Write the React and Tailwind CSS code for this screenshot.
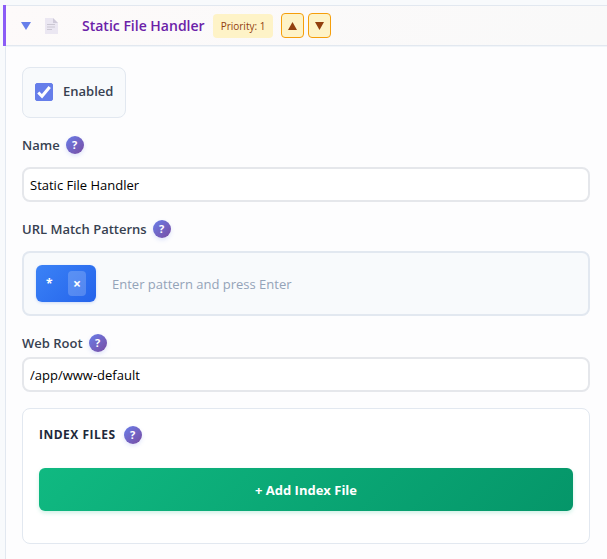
import React, { useState } from "react";

const HelpIcon = ({ topic }) => (
  <button
    type="button"
    aria-label={`Help: ${topic}`}
    className="flex h-[18px] w-[18px] shrink-0 items-center justify-center rounded-full bg-linear-135 from-[#667eea] to-[#764ba2] pb-px text-[11px] leading-none font-bold text-white shadow-[0_2px_4px_rgba(102,126,234,0.2)]"
  >
    ?
  </button>
);

const FieldLabel = ({ htmlFor, label }) => (
  <div className="flex items-center gap-1.5">
    <label htmlFor={htmlFor} className="text-[13px] leading-[18px] font-semibold text-[#374151]">
      {label}
    </label>
    <HelpIcon topic={label} />
  </div>
);

const TextField = ({ id, value, onChange }) => (
  <input
    id={id}
    type="text"
    value={value}
    onChange={(e) => onChange(e.target.value)}
    className="h-[35px] w-full rounded-lg border-2 border-[#e5e7eb] bg-white px-1.5 text-[13px] text-black outline-none"
  />
);

const DocumentIcon = () => (
  <svg width="13" height="16" viewBox="0 0 13 16" aria-hidden="true">
    <path d="M0 0h8l5 5v11H0z" fill="#ebe7f2" />
    <path d="M8 0l5 5H8z" fill="#cfcad9" />
    <path d="M2 6.5h8M2 9h8M2 11.5h5" stroke="#cbc7d2" strokeWidth="1" fill="none" />
  </svg>
);

const PriorityButton = ({ label, down }) => (
  <button type="button" aria-label={label} className="flex h-[25px] w-[23px] items-center justify-center rounded border border-[#f59e0b] bg-[#fef3c7]">
    <svg width="9" height="8" viewBox="0 0 9 8" fill="#92400e" aria-hidden="true">
      {down ? <path d="M0 0h9L4.5 8z" /> : <path d="M4.5 0L9 8H0z" />}
    </svg>
  </button>
);

const HandlerHeader = ({ title, open, onToggle }) => (
  <div className="border-l-[3px] border-l-[#8b5cf6]">
    <div className="flex h-[41px] items-center border-y border-[#e2e8f0] bg-linear-135 from-[#fdfafa] to-[#f9f9f9] pl-[15px]">
      <button type="button" aria-label="Toggle handler" aria-expanded={open} onClick={onToggle} className="mr-3.5 flex">
        <svg width="10" height="8" viewBox="0 0 10 8" fill="#667eea" aria-hidden="true">
          <path d="M0 0h10L5 8z" />
        </svg>
      </button>
      <DocumentIcon />
      <h3 className="ml-6 text-sm leading-5 font-semibold text-[#6b21a8]">{title}</h3>
      <span className="ml-2 rounded bg-[#fef3c7] px-2 py-1 text-[10px] leading-4 font-medium text-[#92400e]">Priority: 1</span>
      <div className="ml-2 flex gap-1">
        <PriorityButton label="Raise priority" />
        <PriorityButton label="Lower priority" down />
      </div>
    </div>
  </div>
);

const PatternTag = ({ pattern, onRemove }) => (
  <span className="flex h-[37px] min-w-[60px] items-center justify-between rounded-md bg-linear-135 from-[#3b82f6] to-[#2563eb] px-2.5 text-xs font-bold text-white shadow-[0_1px_3px_rgba(37,99,235,0.2)]">
    {pattern}
    <button
      type="button"
      aria-label={`Remove ${pattern}`}
      onClick={onRemove}
      className="flex h-[25px] w-[18px] items-center justify-center rounded-sm bg-white/20 text-sm font-bold"
    >
      ×
    </button>
  </span>
);

export default function App() {
  const [open, setOpen] = useState(true);
  const [enabled, setEnabled] = useState(true);
  const [name, setName] = useState("Static File Handler");
  const [webRoot, setWebRoot] = useState("/app/www-default");
  const [patterns, setPatterns] = useState(["*"]);
  const [draft, setDraft] = useState("");

  const addPattern = (e) => {
    if (e.key === "Enter" && draft.trim()) {
      setPatterns([...patterns, draft.trim()]);
      setDraft("");
    }
  };

  return (
    <main className="min-h-screen bg-[#f8fafc] pt-[5px] pl-[3px] font-['Open_Sans','Noto_Sans',sans-serif]">
      <HandlerHeader title="Static File Handler" open={open} onToggle={() => setOpen(!open)} />
      {open && (
        <div className="ml-0.5 border-t border-l border-t-[#f1f5f9] border-l-[#e2e8f0] bg-[#fdfdfe] pt-5 pr-[17px] pb-4 pl-4">
          <label className="inline-flex h-[51px] items-center gap-2.5 rounded-lg border border-[#e2e8f0] bg-[#f8fafc] px-3 pb-0.5 align-top text-[13px] font-semibold text-[#374151]">
            <span className="grid">
              <input
                type="checkbox"
                checked={enabled}
                onChange={(e) => setEnabled(e.target.checked)}
                className="peer col-start-1 row-start-1 h-[18px] w-[18px] appearance-none rounded-xs border border-[#667eea] bg-white checked:bg-[#667eea]"
              />
              <svg width="18" height="18" viewBox="0 0 18 18" aria-hidden="true" className="pointer-events-none invisible col-start-1 row-start-1 peer-checked:visible">
                <path d="M3.3 9.5l3.7 3.7 7.7-9.2" stroke="#fff" strokeWidth="3" fill="none" />
              </svg>
            </span>
            Enabled
          </label>

          <div className="mt-[18px] flex flex-col gap-[13px]">
            <FieldLabel htmlFor="handler-name" label="Name" />
            <TextField id="handler-name" value={name} onChange={setName} />
          </div>

          <div className="mt-[18px] flex flex-col gap-[13px]">
            <FieldLabel htmlFor="url-patterns" label="URL Match Patterns" />
            <div className="flex h-[65px] items-center gap-4 rounded-lg border-2 border-[#e2e8f0] bg-[#f8fafc] px-3">
              {patterns.map((pattern) => (
                <PatternTag key={pattern} pattern={pattern} onRemove={() => setPatterns(patterns.filter((p) => p !== pattern))} />
              ))}
              <input
                id="url-patterns"
                type="text"
                value={draft}
                onChange={(e) => setDraft(e.target.value)}
                onKeyDown={addPattern}
                placeholder="Enter pattern and press Enter"
                className="min-w-0 flex-1 bg-transparent pt-0.5 text-[13px] text-black outline-none placeholder:text-[#94a3b8]"
              />
            </div>
          </div>

          <div className="mt-[18px] flex flex-col gap-[5px]">
            <FieldLabel htmlFor="web-root" label="Web Root" />
            <TextField id="web-root" value={webRoot} onChange={setWebRoot} />
          </div>

          <section className="mt-4 rounded-lg border border-[#e2e8f0] bg-white px-4 pt-[17px] pb-8">
            <div className="flex items-center gap-2">
              <h4 className="text-xs leading-[18px] font-bold tracking-[0.5px] text-[#1e293b] uppercase">Index Files</h4>
              <HelpIcon topic="Index Files" />
            </div>
            <button
              type="button"
              className="mt-6 h-[43px] w-full rounded-md bg-linear-135 from-[#10b981] to-[#059669] pt-0.5 text-[13px] font-bold text-white shadow-[0_2px_4px_rgba(16,185,129,0.2)]"
            >
              + Add Index File
            </button>
          </section>
        </div>
      )}
    </main>
  );
}
